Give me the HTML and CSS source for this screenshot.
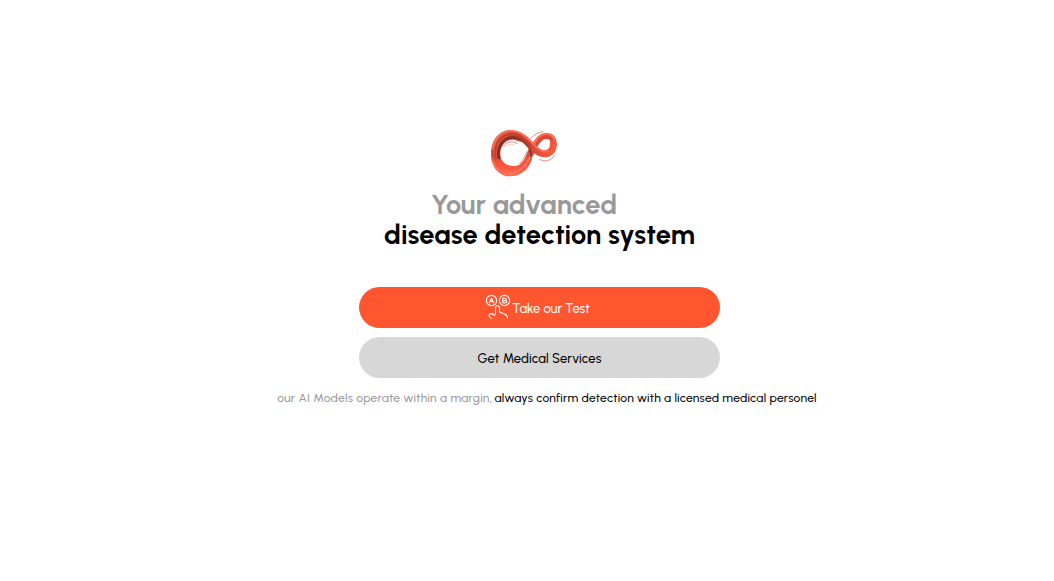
FILE: index.html
```html
<!DOCTYPE html>
<html lang="en">
<head>
<meta charset="utf-8">
<title>Disease detection</title>
<link rel="stylesheet" href="styles.css">
</head>
<body>
<main class="hero">
  <svg class="logo" viewBox="0 0 240 180" aria-hidden="true">
    <defs>
      <linearGradient id="band" gradientUnits="userSpaceOnUse" x1="70" y1="30" x2="205" y2="100"><stop offset="0" stop-color="#d44a37"/><stop offset=".4" stop-color="#c9432f"/><stop offset=".65" stop-color="#dd4c35"/><stop offset="1" stop-color="#fa5a3d"/></linearGradient>
      <linearGradient id="ring" x1="0" y1="0" x2="0" y2="1"><stop offset="0" stop-color="#e5523c"/><stop offset=".5" stop-color="#d94a36"/><stop offset=".8" stop-color="#ff583c"/><stop offset="1" stop-color="#ff6b50"/></linearGradient>
      <linearGradient id="shade" x1="0" y1="0" x2="1" y2="0"><stop offset="0" stop-color="#74302b"/><stop offset=".55" stop-color="#8b302a"/><stop offset="1" stop-color="#b93c2d"/></linearGradient>
    </defs>
    <path fill="url(#ring)" fill-rule="evenodd" d="M80 24C45 24 21 55 21 96C21 136 45 163 78 163C111 163 139 140 146 102L151 85L135 77C125 111 113 131 91 132C66 133 49 118 49 96C49 72 65 53 88 53L112 60L126 43C112 30 97 24 80 24Z"/>
    <path fill="none" stroke="#dc4834" stroke-width="18" d="M139 99C151 67 165 42 187 42C204 42 210 53 209 68"/>
    <path fill="none" stroke="#ff7459" stroke-width="5" d="M149 68C160 46 172 36 188 36C202 37 211 47 214 62"/>
    <path fill="none" stroke="url(#band)" stroke-width="21" stroke-linecap="round" d="M82 37C107 36 126 52 142 71C157 89 171 96 185 95C200 93 209 83 208 66"/>
    <path fill="none" stroke="url(#shade)" stroke-width="8" stroke-linecap="round" d="M45 108C37 78 56 46 86 46C108 46 122 60 138 79"/>
    <path fill="none" stroke="#bf402f" stroke-width="5" d="M36 111C25 72 48 37 82 37C108 37 124 54 140 70"/>
    <path fill="none" stroke="#ff7157" stroke-width="5" stroke-linecap="round" d="M27 80C31 50 52 27 80 27C112 27 131 49 149 68C165 86 179 91 193 87"/>
    <path fill="none" stroke="#ff775e" stroke-width="5" stroke-linecap="round" d="M28 119C38 152 64 160 88 152C113 145 130 126 139 103"/>
    <path fill="none" stroke="#8d302a" stroke-width="5" stroke-linecap="round" d="M137 84Q143 90 140 102"/>
    <path fill="none" stroke="#c75345" stroke-width="2" d="M57 73Q77 50 101 65M107 125Q121 111 130 88M140 50Q157 30 178 29M166 112Q193 126 211 101"/>
    <path fill="none" stroke="#d97b6d" stroke-width="1.2" d="M62 75Q78 62 91 69"/>
  </svg>
  <h1 class="title"><span class="lead">Your advanced</span><span class="subject">disease detection system</span></h1>
  <div class="actions">
    <button class="button primary">
      <svg class="choice" viewBox="0 0 26 26" aria-hidden="true">
        <g fill="none" stroke="#fff" stroke-width="1.1" stroke-linecap="round" stroke-linejoin="round">
          <circle cx="6.5" cy="6.5" r="5.1"/><circle cx="19.5" cy="6.5" r="5.1"/>
          <path d="M4.4 8.8 6.5 4.2 8.6 8.8M5.2 7.4H7.8M17.7 4.3H20Q21.3 4.3 21.3 5.4T20 6.5H17.7M20 6.5Q21.6 6.5 21.6 7.7T20.1 8.8H17.7V4.3"/>
          <path d="M6.3 24.3Q3.7 23 4.2 21.2C4.7 19.3 7.2 19.1 8 20.6Q10.5 21.7 10.5 19.2V13.6Q10.5 11.8 12.5 11.8T14.5 13.6V18L19.5 20.1Q22.6 21.3 22.6 24.3"/>
        </g>
      </svg>
      <span class="test-label">Take our Test</span>
    </button>
    <button class="button secondary"><span class="services-label">Get Medical Services</span></button>
  </div>
  <p class="notice"><span class="margin-note">our AI Models operate within a margin,</span><span class="confirm-note">always confirm detection with a licensed medical personel</span></p>
</main>
</body>
</html>
```
FILE: styles.css
```css
* { box-sizing: border-box; }
body { margin: 0; background: #fff; font-family: Urbanist, Lato, sans-serif; }
.hero { display: flex; flex-direction: column; align-items: center; width: 1054px; height: 581px; padding-top: 122px; }
.logo { width: 80px; height: 60px; margin-right: 6px; flex: none; }
.title { display: flex; flex-direction: column; align-items: center; margin: 8px 0 0; font-size: 27.2px; line-height: 30px; font-weight: 700; white-space: nowrap; }
.lead { margin-right: 6px; color: #999; letter-spacing: .08px; }
.subject { margin-left: 25px; color: #000; letter-spacing: .14px; }
.actions { display: flex; flex-direction: column; gap: 9px; width: 361px; margin: 37px 0 0 25px; }
.button { display: flex; justify-content: center; align-items: center; height: 41px; padding: 0; border: 0; border-radius: 21px; font: 500 13px/20px Urbanist, Lato, sans-serif; white-space: nowrap; }
.primary { background: #ff5630; color: #fff; padding-right: 4px; }
.secondary { background: #d7d7d7; color: #000; }
.choice { width: 26px; height: 26px; margin: 0 1px 2px 0; }
.test-label { padding-top: 2px; }
.services-label { padding-top: 2px; font-weight: 550; letter-spacing: .1px; }
.notice { display: flex; gap: 2px; margin: 12px 0 0 40px; font-size: 12px; line-height: 16px; font-weight: 500; white-space: nowrap; }
.margin-note { color: #999; letter-spacing: .27px; }
.confirm-note { color: #000; font-weight: 550; letter-spacing: .24px; }
```
